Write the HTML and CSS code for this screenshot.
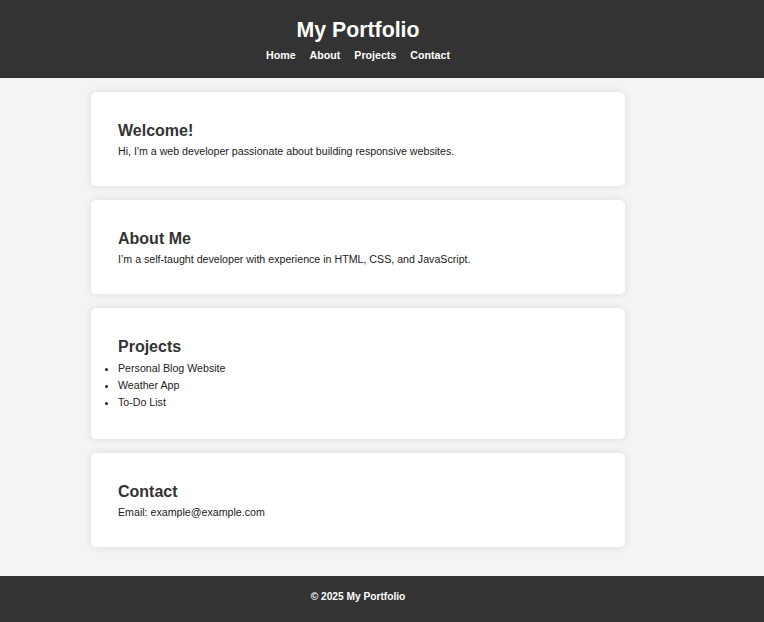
FILE: index.html
```html
<!DOCTYPE html>
<html lang="en">
<head>
<meta charset="utf-8">
<title>My Portfolio</title>
<link rel="stylesheet" href="styles.css">
</head>
<body>
<header class="site-header">
  <div class="wrap">
    <h1 class="title">My Portfolio</h1>
    <nav class="nav">
      <a href="#home">Home</a>
      <a href="#about">About</a>
      <a href="#projects">Projects</a>
      <a href="#contact">Contact</a>
    </nav>
  </div>
</header>
<main class="main">
  <div class="wrap">
    <section class="card" id="home">
      <h2>Welcome!</h2>
      <p>Hi, I'm a web developer passionate about building responsive websites.</p>
    </section>
    <section class="card" id="about">
      <h2>About Me</h2>
      <p>I’m a self-taught developer with experience in HTML, CSS, and JavaScript.</p>
    </section>
    <section class="card" id="projects">
      <h2>Projects</h2>
      <ul class="list">
        <li>Personal Blog Website</li>
        <li>Weather App</li>
        <li>To-Do List</li>
      </ul>
    </section>
    <section class="card" id="contact">
      <h2>Contact</h2>
      <p>Email: example@example.com</p>
    </section>
  </div>
</main>
<footer class="site-footer">
  <div class="wrap">
    <p>© 2025 My Portfolio</p>
  </div>
</footer>
</body>
</html>
```
FILE: styles.css
```css
html, body {
  margin: 0;
  padding: 0;
}
body {
  background: #f4f4f4;
  font-family: "Liberation Sans", Arial, sans-serif;
  color: #333;
  min-height: 622px;
  display: flex;
  flex-direction: column;
}
.wrap {
  width: 716px;
}
.site-header {
  background: #333;
  color: #fff;
  padding: 17px 0 16px;
  text-align: center;
}
.title {
  margin: 0 0 5px;
  font-size: 21.3px;
  line-height: 26px;
  font-weight: bold;
}
.nav {
  display: flex;
  justify-content: center;
  font-size: 10.65px;
  line-height: 14px;
  font-weight: bold;
}
.nav a {
  color: #fff;
  text-decoration: none;
  margin: 0 7px;
}
.main {
  padding: 14px 0 14px;
  flex: 1;
}
.card {
  background: #fff;
  margin: 0 91px 14px;
  padding: 14px 27px;
  border-radius: 5px;
  box-shadow: 0 0 8px rgba(0, 0, 0, 0.1);
}
.card h2 {
  margin: 15px 0 3px;
  font-size: 16px;
  line-height: 20px;
  font-weight: bold;
  color: #333;
}
.card p {
  margin: 0 0 14px;
  font-size: 10.65px;
  line-height: 14px;
  color: #222;
}
.list {
  margin: 0 0 14px;
  padding: 0;
  font-size: 10.65px;
  line-height: 17px;
  color: #222;
}
.list li {
  list-style: disc outside;
}
.site-footer {
  background: #333;
  color: #fff;
  padding: 14px 0 18px;
  text-align: center;
}
.site-footer p {
  margin: 0;
  font-size: 10.2px;
  line-height: 14px;
  font-weight: bold;
}
```
